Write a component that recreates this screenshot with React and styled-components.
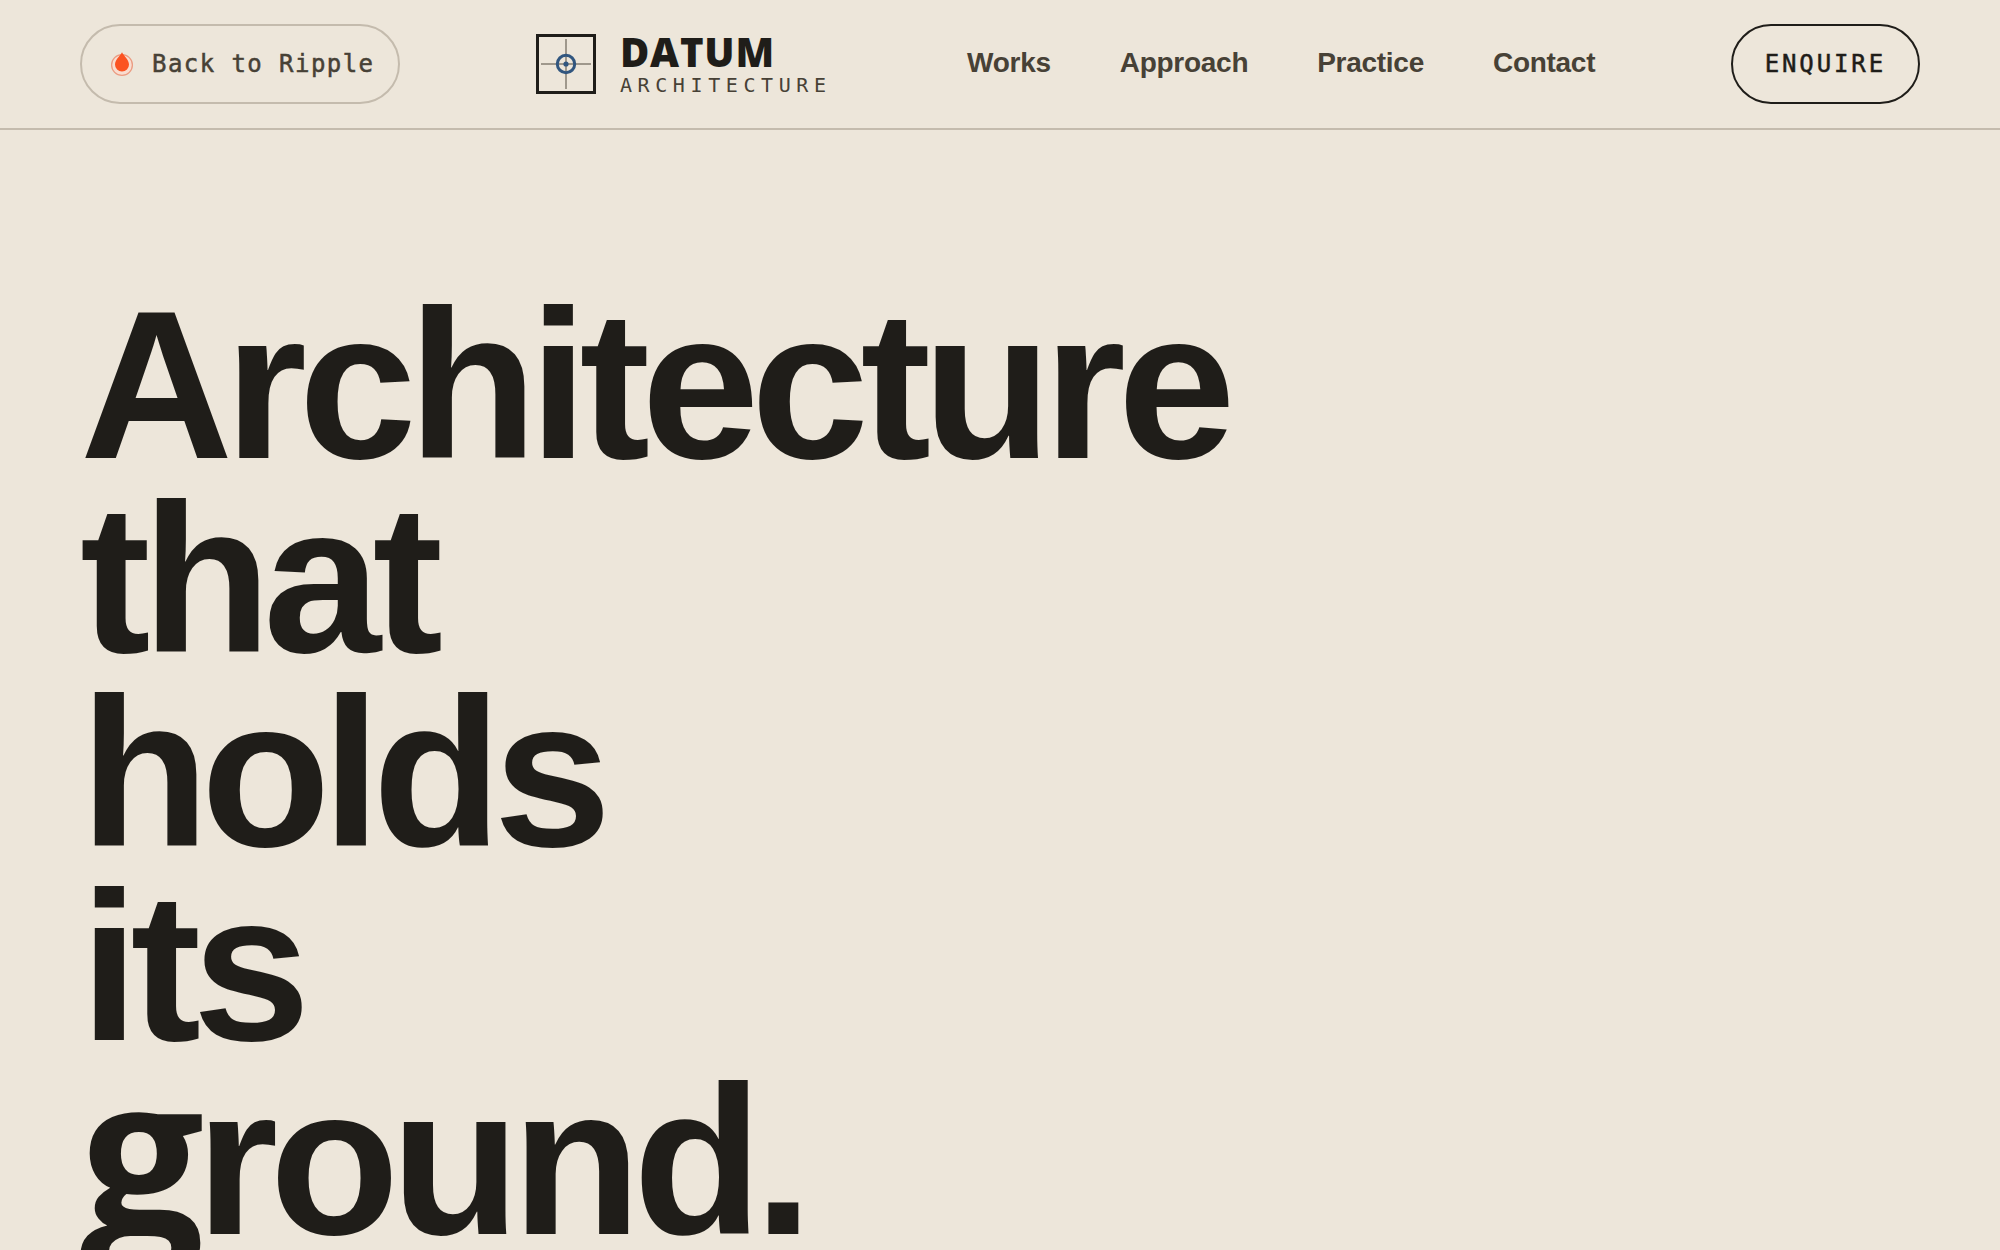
import React from "react";
import styled, { createGlobalStyle } from "styled-components";

const ink = "#1f1d19";
const inkSoft = "#474136";
const paper = "#ede6da";
const line = "#c4bbad";
const sans = `"Liberation Sans", Arial, sans-serif`;
const mono = `"DejaVu Sans Mono", "Liberation Mono", monospace`;

const GlobalStyle = createGlobalStyle`
  *, *::before, *::after { box-sizing: border-box; }
  body { margin: 0; background: ${paper}; color: ${ink}; font-family: ${sans}; }
  a { color: inherit; text-decoration: none; }
`;

const Header = styled.header`
  display: flex;
  align-items: center;
  justify-content: space-between;
  padding: 24px 80px;
  border-bottom: 2px solid ${line};
`;

const BackLink = styled.a`
  display: flex;
  align-items: center;
  gap: 18px;
  height: 80px;
  padding: 0 24px 0 28px;
  border: 2px solid ${line};
  border-radius: 40px;
  color: ${inkSoft};
  font: 400 24px/32px ${mono};
  letter-spacing: 0.06em;
  -webkit-text-stroke: 0.5px currentColor;
`;

const Brand = styled.a`
  display: flex;
  align-items: center;
  gap: 24px;
`;

const BrandText = styled.span`
  display: flex;
  flex-direction: column;
`;

const BrandName = styled.span`
  font: 800 40px/42px "Open Sans", ${sans};
  letter-spacing: 0.02em;
`;

const BrandKind = styled.span`
  color: ${inkSoft};
  font: 400 20px/24px ${mono};
  letter-spacing: 0.28em;
`;

const Nav = styled.nav`
  display: flex;
  gap: 69px;
  color: ${inkSoft};
  font: 700 28px/36px ${sans};
  letter-spacing: -0.01em;
`;

const NavLink = styled.a`
  border-bottom: 2px solid transparent;

  &:hover {
    border-color: currentColor;
  }
`;

const Enquire = styled.button`
  height: 80px;
  padding: 0 32px;
  border: 2px solid ${ink};
  border-radius: 40px;
  background: transparent;
  color: ${ink};
  font: 400 24px/32px ${mono};
  letter-spacing: 0.12em;
  -webkit-text-stroke: 0.5px currentColor;
  cursor: pointer;
`;

const Hero = styled.main`
  padding: 158px 80px 0;
`;

const Title = styled.h1`
  margin: 0;
  font-size: 212px;
  font-weight: 700;
  line-height: 194px;
  letter-spacing: -0.04em;
`;

const Word = styled.span`
  display: block;
`;

const BookWord = styled(Word)`
  &::first-letter {
    font-family: "Open Sans", ${sans};
    font-size: 220px;
    line-height: 0;
  }
`;

const DropIcon = () => (
  <svg width="24" height="26" viewBox="1 0 24 26" aria-hidden="true">
    <circle cx="13" cy="14" r="10.4" fill="#f9ddd0" stroke="#eb9c82" strokeWidth="1.3" />
    <path d="M13 1.2C14.4 4.2 20 8.6 20 13.6A7 7 0 0 1 6 13.6C6 8.6 11.6 4.2 13 1.2Z" fill="#fb5322" />
  </svg>
);

const DatumMark = () => (
  <svg width="60" height="60" viewBox="0 0 60 60" aria-hidden="true">
    <rect x="1.5" y="1.5" width="57" height="57" fill="none" stroke={ink} strokeWidth="3" />
    <path d="M30 5V55M5 30H55" stroke="#9f988c" strokeWidth="2" />
    <circle cx="30" cy="30" r="8.7" fill="none" stroke="#31567f" strokeWidth="3" />
    <circle cx="30" cy="30" r="2.6" fill="#31567f" />
  </svg>
);

const links = ["Works", "Approach", "Practice", "Contact"];
const words = ["Architecture", "that", "holds", "its"];

export default function App() {
  return (
    <>
      <GlobalStyle />
      <Header>
        <BackLink href="#ripple">
          <DropIcon />
          Back to Ripple
        </BackLink>
        <Brand href="#top">
          <DatumMark />
          <BrandText>
            <BrandName>DATUM</BrandName>
            <BrandKind>ARCHITECTURE</BrandKind>
          </BrandText>
        </Brand>
        <Nav>
          {links.map((label) => (
            <NavLink key={label} href={`#${label.toLowerCase()}`}>
              {label}
            </NavLink>
          ))}
        </Nav>
        <Enquire type="button">ENQUIRE</Enquire>
      </Header>
      <Hero>
        <Title>
          {words.map((word) => (
            <Word key={word}>{word}</Word>
          ))}
          <BookWord>ground.</BookWord>
        </Title>
      </Hero>
    </>
  );
}
